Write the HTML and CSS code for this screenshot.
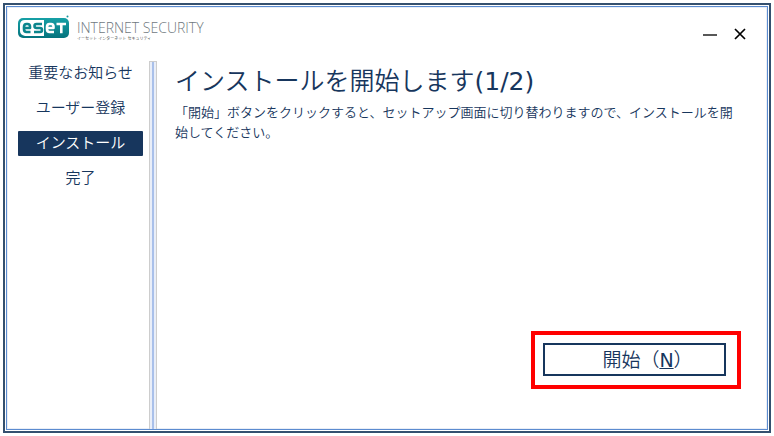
FILE: index.html
```
<!DOCTYPE html>
<html lang="ja">
<head>
  <meta charset="UTF-8">
  <meta name="viewport" content="width=device-width, initial-scale=1.0">
  <title>ESET INTERNET SECURITY</title>
  <link rel="stylesheet" href="styles.css">
</head>
<body>
  <div class="window">
    <div class="window-inner">

      <!-- Title bar -->
      <header class="titlebar">
        <div class="brand">
          <svg class="brand-logo" width="53" height="24" viewBox="0 0 53 24" role="img" aria-label="eset">
            <defs>
              <linearGradient id="teal" x1="0" y1="0" x2="0" y2="1">
                <stop offset="0" stop-color="#16a0a6"/>
                <stop offset="1" stop-color="#04737d"/>
              </linearGradient>
            </defs>
            <rect x="0" y="3" width="51" height="20" rx="5" fill="url(#teal)"/>
            <path d="M7 5H26V21H7Q2 20 2 16V10Q2 5 7 5Z" fill="#fff"/>
            <g fill="none" stroke="#0b858d" stroke-width="2.6" stroke-linejoin="round">
              <path d="M6 13H12V11.5Q12 9 9.5 9H8.5Q6 9 6 12V14Q6 17 8.5 17H12.5"/>
              <path d="M24 9H18.5Q16.5 9 16.5 11T18.5 13H22Q24 13 24 15T22 17H16"/>
            </g>
            <g fill="none" stroke="#fff" stroke-width="2.6" stroke-linejoin="round">
              <path d="M29 13H35.5V11.5Q35.5 9 33 9H31.5Q29 9 29 12V14Q29 17 31.5 17H36"/>
              <path d="M38.5 9H48M43.300 9V18.3"/>
            </g>
            <circle cx="49.5" cy="1.5" r="1" fill="#1597a0"/>
          </svg>
          <div class="brand-text">
            <div class="brand-name">INTERNET SECURITY</div>
            <div class="brand-kana">イーセット インターネット セキュリティ</div>
          </div>
        </div>
        <div class="window-controls">
          <button class="control" type="button" aria-label="最小化">
            <svg width="14" height="14" viewBox="0 0 14 14"><path d="M0 8H14" stroke="#585858" stroke-width="2"/></svg>
          </button>
          <button class="control" type="button" aria-label="閉じる">
            <svg width="14" height="14" viewBox="0 0 14 14"><path d="M2 2L12 12M12 2L2 12" stroke="#000" stroke-width="1.7"/></svg>
          </button>
        </div>
      </header>

      <div class="content">
        <!-- Installation steps -->
        <nav class="steps">
          <div class="step">重要なお知らせ</div>
          <div class="step">ユーザー登録</div>
          <div class="step active" aria-current="step">インストール</div>
          <div class="step">完了</div>
        </nav>

        <div class="splitter"></div>

        <main class="main">
          <h1 class="heading">インストールを開始します<span class="latin">(1/2)</span></h1>
          <p class="message">「開始」ボタンをクリックすると、セットアップ画面に切り替わりますので、インストールを開始してください。</p>
          <div class="highlight">
            <button class="start-button" type="button" accesskey="n">開始（<u class="latin">N</u>）</button>
          </div>
        </main>
      </div>

    </div>
  </div>
</body>
</html>
```
FILE: styles.css
```
* {
  box-sizing: border-box;
}

body {
  margin: 0;
  padding: 3px;
  min-height: 100vh;
  display: flex;
  background-color: white;
  color: #17365d;
  font-family: "DejaVu Sans", "Noto Sans CJK JP", sans-serif;
  font-weight: 350;
}

.latin {
  font-weight: 400;
}

/* Double window frame */
.window {
  flex: 1;
  display: flex;
  padding: 1px;
  border: 2px solid #34506f;
}

.window-inner {
  flex: 1;
  display: flex;
  flex-direction: column;
  border: 1px solid #5b8bd0;
  box-shadow: inset 0 0 0 1px #e9eef6;
}

/* Title bar */
.titlebar {
  display: flex;
  justify-content: space-between;
  align-items: flex-start;
  height: 54px;
  padding: 8px 20px 0 11px;
}

.brand {
  display: flex;
  gap: 6px;
}

.brand-text {
  padding-top: 4px;
  white-space: nowrap;
}

.brand-name {
  font-family: "Open Sans", sans-serif;
  font-size: 14px;
  font-weight: 300;
  line-height: 18px;
  color: #6f787e;
}

.brand-kana {
  font-size: 4px;
  line-height: 4px;
  color: #333;
}

.window-controls {
  display: flex;
  gap: 16px;
  padding-top: 12px;
}

.control {
  display: flex;
  padding: 0;
  border: none;
  background: none;
  cursor: pointer;
}

/* Body of the window */
.content {
  flex: 1;
  display: flex;
}

.steps {
  width: 142px;
  padding: 0 6px 0 11px;
  display: flex;
  flex-direction: column;
  gap: 10px;
}

.step {
  font-size: 15px;
  line-height: 25px;
  text-align: center;
  border-radius: 1px;
}

.step.active {
  background-color: #17365d;
  color: white;
}

.splitter {
  width: 8px;
  border: 1px solid #cdcdcd;
  border-width: 1px 1px 0;
  background: linear-gradient(#a9c0ea, #a9c0ea) center / 2px 100% no-repeat #e9eef8;
}

.main {
  flex: 1;
  display: flex;
  flex-direction: column;
  padding: 0 26px 40px 18px;
}

.heading {
  margin: 0;
  font-size: 25px;
  font-weight: 350;
  line-height: 42px;
}

.message {
  margin: 0;
  font-size: 13px;
  line-height: 20px;
}

/* Red frame around the start button */
.highlight {
  align-self: flex-end;
  width: 210px;
  margin-top: auto;
  padding: 8px 11px 9px 8px;
  border: 4px solid #f00;
}

.start-button {
  width: 100%;
  height: 33px;
  padding: 0 0 0 26px;
  border: 2px solid #17365d;
  background: white;
  color: #17365d;
  font-family: inherit;
  font-size: 19px;
  font-weight: 350;
  line-height: 28px;
  cursor: pointer;
}
```
